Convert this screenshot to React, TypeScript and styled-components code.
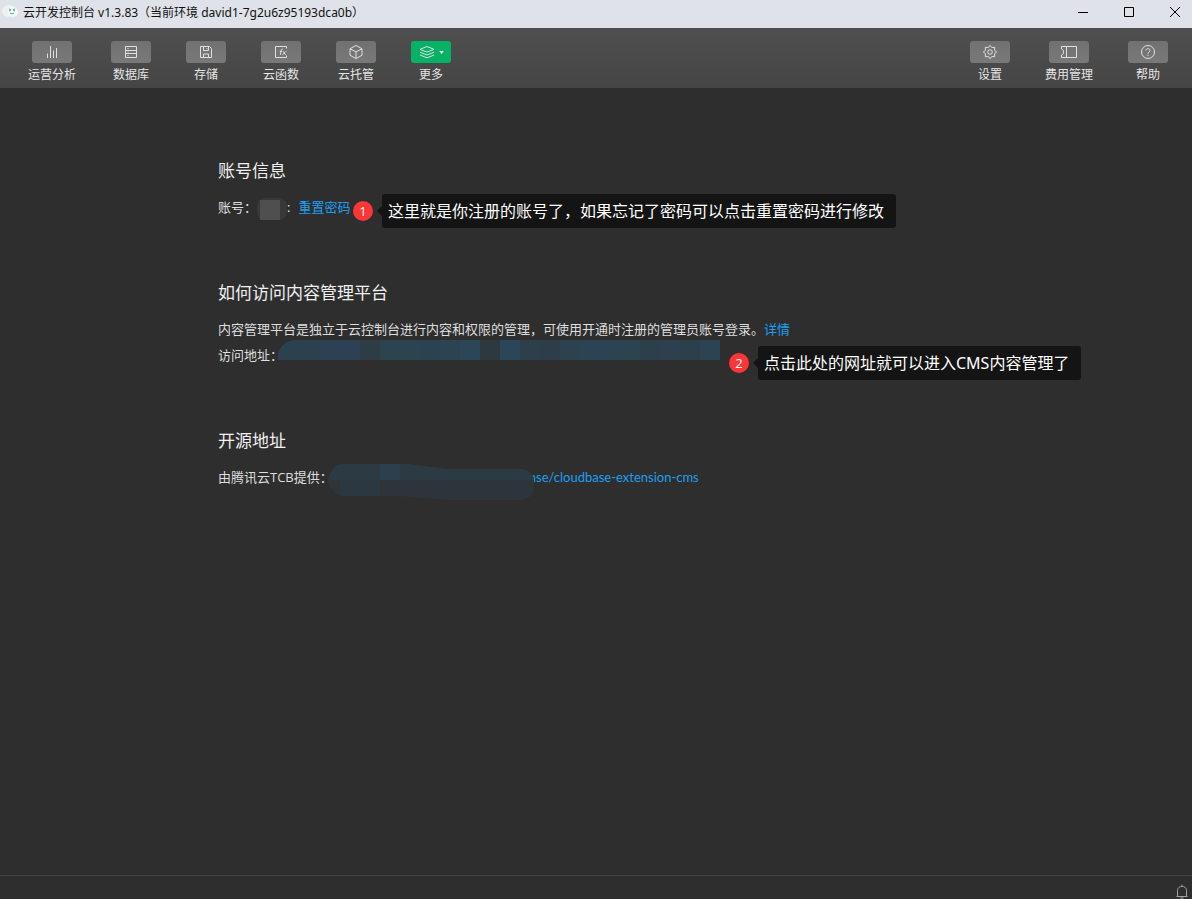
import React from "react";
import styled, { createGlobalStyle } from "styled-components";

const GlobalStyle = createGlobalStyle`
  * { box-sizing: border-box; }
  body {
    margin: 0;
    background: #2e2e2e;
    color: #dedede;
    font: 13px/26px "Open Sans", "Noto Sans CJK SC", sans-serif;
  }
  button { border: 0; padding: 0; background: none; font: inherit; color: inherit; }
`;

const Shell = styled.div`
  min-height: 100vh;
  display: flex;
  flex-direction: column;
`;

const TitleBar = styled.header`
  display: flex;
  align-items: flex-start;
  height: 28px;
  padding-left: 2px;
  background: #dfe2e8;
  color: #111;
`;

const AppLogo = styled.svg`
  margin-top: 4px;
`;

const AppTitle = styled.h1`
  flex: 1;
  margin: 0 0 0 5px;
  font-family: "Noto Sans", "Noto Sans CJK SC", sans-serif;
  font-size: 12px;
  line-height: 26px;
  font-weight: 400;
  white-space: nowrap;
`;

const WindowControls = styled.div`
  display: flex;
  gap: 12px;
`;

const WindowButton = styled.button`
  width: 34px;
  height: 24px;
  display: flex;
  align-items: center;
  justify-content: center;
`;

const Toolbar = styled.nav`
  display: flex;
  justify-content: space-between;
  height: 60px;
  padding: 13px 24px 0 28px;
  background: linear-gradient(#4f4f4f, #454545);
`;

const ToolGroup = styled.div`
  display: flex;
  gap: 35px;
  align-items: flex-start;
`;

const Tool = styled.button`
  display: flex;
  flex-direction: column;
  align-items: center;
  min-width: 40px;
  font-size: 12px;
  line-height: 24px;
  color: #e6e6e6;
  white-space: nowrap;
`;

const ToolFace = styled.span<{ $active?: boolean }>`
  display: flex;
  align-items: center;
  justify-content: center;
  gap: 4px;
  width: 40px;
  height: 22px;
  border-radius: 3px;
  background: ${(p) => (p.$active ? "#07b267" : "linear-gradient(#717171, #797979)")};
`;

const Main = styled.main`
  flex: 1;
  width: 100%;
  max-width: 756px;
  margin: 0 auto;
  padding: 70px 0;
  display: flex;
  flex-direction: column;
  gap: 60px;
`;

const Heading = styled.h2`
  margin: 0 0 10px;
  font-size: 17px;
  line-height: 26px;
  font-weight: 400;
  color: #f0f0f0;
`;

const Line = styled.div`
  position: relative;
  display: flex;
  height: 26px;
  white-space: nowrap;
`;

const Link = styled.a`
  color: #1e9ff2;
  text-decoration: none;
`;

const AccountMask = styled.svg`
  margin-top: 4px;
`;

const LinkAfter = styled(Link)`
  margin-left: 8px;
`;

const UrlMask = styled.svg`
  position: absolute;
  left: 60px;
  top: -2px;
`;

const RepoMask = styled.svg`
  position: absolute;
  left: 110px;
  top: 0;
`;

const RepoLink = styled(Link)`
  margin-left: 196px;
  font-family: Lato, "Noto Sans CJK SC", sans-serif;
`;

const Callout = styled.div<{ $left: number; $top: number }>`
  position: absolute;
  left: ${(p) => p.$left}px;
  top: ${(p) => p.$top}px;
  display: flex;
  align-items: center;
`;

const Badge = styled.span`
  width: 20px;
  height: 20px;
  border-radius: 50%;
  background: #fa3637;
  color: #fff;
  line-height: 20px;
  text-align: center;
`;

const Arrow = styled.span`
  margin-left: 4px;
  border: 5px solid transparent;
  border-left-width: 0;
  border-right-color: #141414;
`;

const Bubble = styled.span`
  height: 34px;
  padding: 0 12px 0 6px;
  border-radius: 3px;
  background: #141414;
  color: #fff;
  font-family: "Noto Sans", "Noto Sans CJK SC", sans-serif;
  font-size: 16px;
  line-height: 34px;
`;

const StatusBar = styled.footer`
  display: flex;
  justify-content: flex-end;
  height: 24px;
  padding: 8px 4px 0 0;
  border-top: 1px solid #444;
  color: #a0a0a0;
`;

const BellButton = styled.button`
  display: flex;
  width: 12px;
  height: 15px;
`;

const glyphs = {
  bars: <path d="M3.5 14V9.5M6.5 14V2M9.5 14V6.5M12.5 14V4" />,
  database: <path d="M2.5 2.5h11v11h-11zM2.5 6.5h11M2.5 9.5h11M4.5 4.5h1M4.5 8h1M4.5 11.5h1" />,
  disk: <path d="M2.5 2.5h9l2 2v9h-11zM5.5 2.5v4h5v-4M5.5 13.5v-3.5h5v3.5M9 4v1" />,
  fn: (
    <>
      <path d="M13.5 4.5v-2h-11v11h11v-2" />
      <path d="M10 5.2c-1-.3-1.6.2-1.8 1.2l-.8 4.4M6.8 7.3h2.5M10.2 7.3l2.3 3.5M13 7.3l-3.5 3.5" />
    </>
  ),
  cube: <path d="M8 1.5l6 3.2v6.6l-6 3.2-6-3.2V4.7zM2 4.7l6 3.2 6-3.2M8 7.9v6.6" />,
  layers: <path d="M8 2.5l7 2.8-7 2.8-7-2.8zM1 8.2l7 2.8 7-2.8M1 11l7 2.8 7-2.8" />,
  gear: (
    <>
      <path d="M8 1.3L9.7 3.5 12.7 3.3 12.5 6.3 14.7 8 12.5 9.7 12.7 12.7 9.7 12.5 8 14.7 6.3 12.5 3.3 12.7 3.5 9.7 1.3 8 3.5 6.3 3.3 3.3 6.3 3.5z" />
      <circle cx="8" cy="8" r="2.3" />
    </>
  ),
  ticket: <path d="M.5 2.5h15v11H.5v-2.5c2.8-.6 2.8-5.4 0-6zM5.5 2.5v11" />,
  help: (
    <>
      <circle cx="8" cy="8" r="6.5" />
      <path d="M6 6.5c0-2.6 4-2.6 4 0 0 1.5-2 1.5-2 3.2M8 10.8v1.2" />
    </>
  ),
};

type GlyphName = keyof typeof glyphs;

const Glyph = ({ name }: { name: GlyphName }) => (
  <svg width="16" height="16" viewBox="0 0 16 16" fill="none" stroke="#e0e0e0" strokeWidth="1" aria-hidden="true">
    {glyphs[name]}
  </svg>
);

interface ToolItem {
  label: string;
  icon: GlyphName;
  active?: boolean;
}

const leftTools: ToolItem[] = [
  { label: "运营分析", icon: "bars" },
  { label: "数据库", icon: "database" },
  { label: "存储", icon: "disk" },
  { label: "云函数", icon: "fn" },
  { label: "云托管", icon: "cube" },
  { label: "更多", icon: "layers", active: true },
];

const rightTools: ToolItem[] = [
  { label: "设置", icon: "gear" },
  { label: "费用管理", icon: "ticket" },
  { label: "帮助", icon: "help" },
];

const Tools = ({ items }: { items: ToolItem[] }) => (
  <ToolGroup>
    {items.map((t) => (
      <Tool key={t.label} type="button">
        <ToolFace $active={t.active}>
          <Glyph name={t.icon} />
          {t.active && (
            <svg width="5" height="3" viewBox="0 0 6 4" aria-hidden="true">
              <path d="M0 0h6L3 4z" fill="#fff" />
            </svg>
          )}
        </ToolFace>
        {t.label}
      </Tool>
    ))}
  </ToolGroup>
);

const Note = ({ n, left, top, children }: { n: number; left: number; top: number; children: React.ReactNode }) => (
  <Callout $left={left} $top={top}>
    <Badge>{n}</Badge>
    <Arrow />
    <Bubble>{children}</Bubble>
  </Callout>
);

/* Mosaic tiles over the hidden address, 20px each */
const urlTiles = [
  "#2c4150", "#2c4150", "#2c4153", "#2c4153", "#2d3c45", "#2c4350", "#2c4350", "#2b4252",
  "#2c4352", "#2b4658", "#2d383f", "#2b4659", "#2d3f4a", "#2d3e4a", "#2c424e", "#2b4455",
  "#2b4353", "#2c4350", "#2c3f4b", "#2c4050", "#2c404c", "#2c4353",
];

export default function App() {
  return (
    <Shell>
      <GlobalStyle />
      <TitleBar>
        <AppLogo width="16" height="16" viewBox="0 0 16 16" aria-hidden="true">
          <ellipse cx="7" cy="7" rx="7" ry="6" fill="#eef3f1" />
          <ellipse cx="11" cy="8" rx="5" ry="5" fill="#f4f8f6" />
          <path d="M7 5l2 1-2 1M13 5l-2 1 2 1M8 9c1 1 3 1 4 0" fill="none" stroke="#3fb489" />
        </AppLogo>
        <AppTitle>云开发控制台 v1.3.83（当前环境 david1-7g2u6z95193dca0b）</AppTitle>
        <WindowControls>
          <WindowButton type="button" aria-label="最小化">
            <svg width="10" height="10"><path d="M0 5.5h10" stroke="#000" /></svg>
          </WindowButton>
          <WindowButton type="button" aria-label="最大化">
            <svg width="10" height="10"><path d="M.5.5h9v9h-9z" stroke="#000" fill="none" /></svg>
          </WindowButton>
          <WindowButton type="button" aria-label="关闭">
            <svg width="10" height="10"><path d="M0 0l10 10M10 0L0 10" stroke="#000" /></svg>
          </WindowButton>
        </WindowControls>
      </TitleBar>
      <Toolbar>
        <Tools items={leftTools} />
        <Tools items={rightTools} />
      </Toolbar>
      <Main>
        <section>
          <Heading>账号信息</Heading>
          <Line>
            账号：
            <AccountMask width="30" height="22" aria-hidden="true">
              <rect width="30" height="22" rx="8" fill="#383838" />
              <path d="M3 2h20v20H3z" fill="#4f4f4f" />
            </AccountMask>
            :
            <LinkAfter href="#reset">重置密码</LinkAfter>
            <Note n={1} left={135} top={0}>这里就是你注册的账号了，如果忘记了密码可以点击重置密码进行修改</Note>
          </Line>
        </section>
        <section>
          <Heading>如何访问内容管理平台</Heading>
          <Line>
            内容管理平台是独立于云控制台进行内容和权限的管理，可使用开通时注册的管理员账号登录。
            <Link href="#detail">详情</Link>
          </Line>
          <Line>
            访问地址：
            <UrlMask width="442" height="20" aria-hidden="true">
              <clipPath id="url-shape"><path d="M0 20V14Q4 0 18 0H442V20z" /></clipPath>
              <g clipPath="url(#url-shape)">
                {urlTiles.map((c, i) => (
                  <rect key={i} x={i === 0 ? 0 : i * 20 + 2} width={i === 0 ? 22 : 20} height="20" fill={c} />
                ))}
              </g>
            </UrlMask>
            <Note n={2} left={511} top={4}>点击此处的网址就可以进入CMS内容管理了</Note>
          </Line>
        </section>
        <section>
          <Heading>开源地址</Heading>
          <Line>
            由腾讯云TCB提供：
            <RepoLink href="#repo">nse/cloudbase-extension-cms</RepoLink>
            <RepoMask width="206" height="36" aria-hidden="true">
              <clipPath id="repo-shape"><path d="M0 16Q4 0 16 0H80L120 5H194Q206 7 206 18V26Q204 35 192 36H120L70 32H16Q2 30 0 16z" /></clipPath>
              <g clipPath="url(#repo-shape)">
                <path d="M0 0h206v36H0z" fill="#2d353b" />
                <path d="M12 16h40v20H12z" fill="#2c3841" />
                <path d="M0 0h206v16H0z" fill="#2c3a44" />
                <path d="M52 0h20v16H52z" fill="#2b3f4d" />
              </g>
            </RepoMask>
          </Line>
        </section>
      </Main>
      <StatusBar>
        <BellButton type="button" aria-label="通知">
          <svg width="12" height="15" viewBox="0 0 12 15" fill="none" stroke="currentColor">
            <path d="M.5 12.5h11M1.500 12.500V6.500C1.500 1 10.500 1 10.500 6.500v6M6 2.200V.5M4.500 14h3" />
          </svg>
        </BellButton>
      </StatusBar>
    </Shell>
  );
}
